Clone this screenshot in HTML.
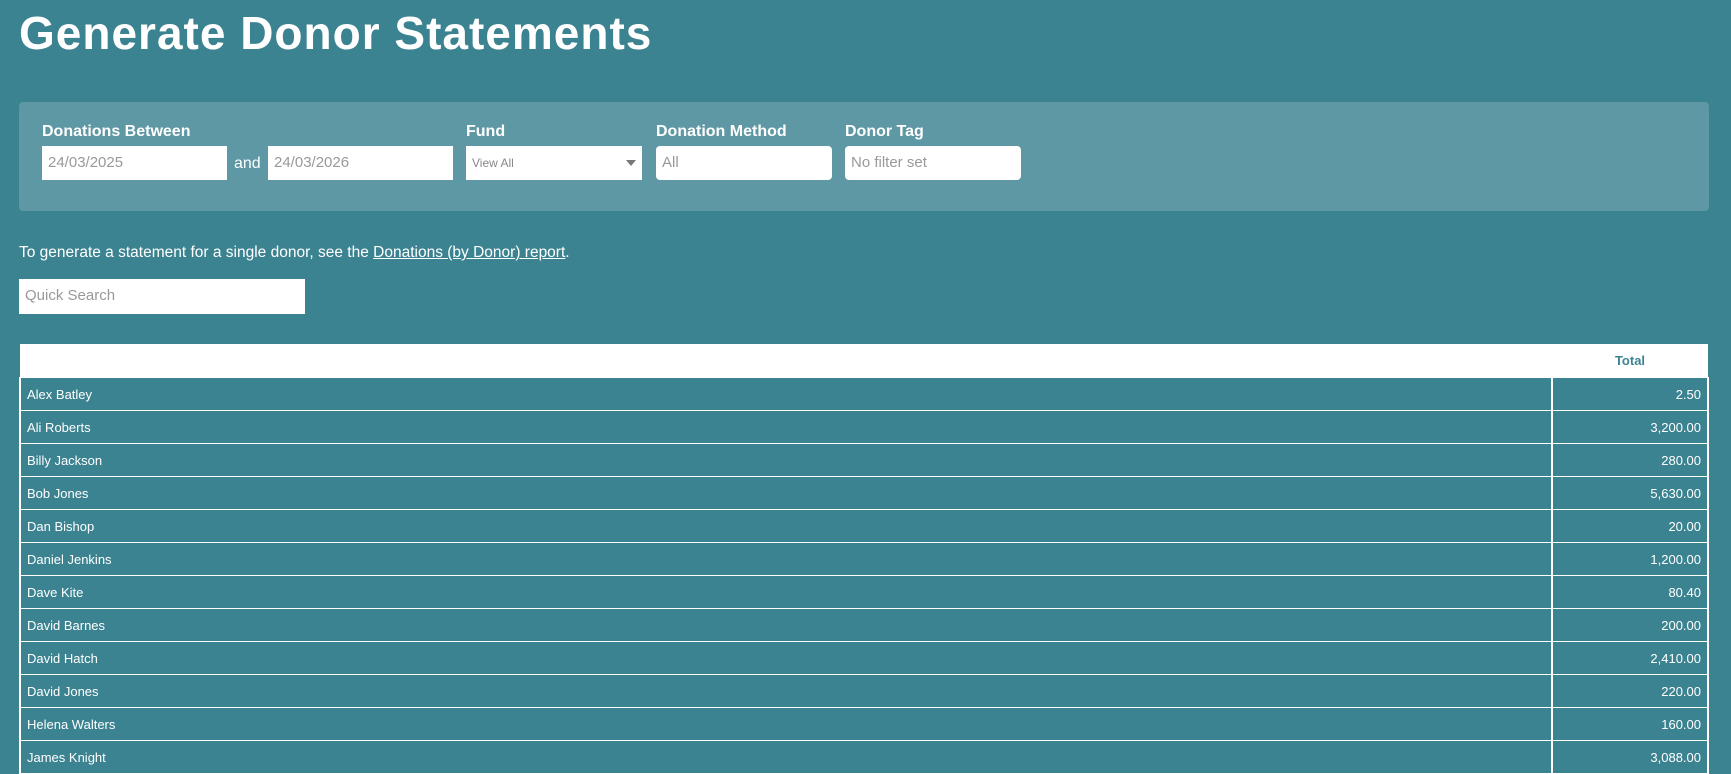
<!DOCTYPE html>
<html><head><style>
body{margin:0;width:1731px;height:773px;overflow:hidden;background:#3c8391;font-family:"Liberation Sans",sans-serif;color:#fff;position:relative}
.a{position:absolute}
h1{position:absolute;left:19px;top:6px;margin:0;font-size:46px;font-weight:bold;letter-spacing:1px}
.panel{left:19px;top:102px;width:1690px;height:109px;background:#5e98a4;border-radius:4px}
.lbl{font-weight:bold;font-size:16px;top:123px}
.inp{top:146px;height:34px;background:#fff;color:#999;font-size:15px;line-height:34px;padding-left:6px;box-sizing:border-box}
.txt{left:19px;top:244px;font-size:15.5px}
table{position:absolute;left:19px;top:344px;width:1690px;border-collapse:collapse;font-size:13px}
td{height:33px;padding:0 6px;border:1px solid #fff;border-width:1px 2px;box-sizing:border-box}
th{height:31px;background:#fff;color:#3c8391;font-size:13px;text-align:center}
td.r{text-align:right;width:156px}
</style></head><body>
<h1>Generate Donor Statements</h1>
<div class="a panel"></div>
<div class="a lbl" style="left:42px">Donations Between</div>
<div class="a lbl" style="left:466px">Fund</div>
<div class="a lbl" style="left:656px">Donation Method</div>
<div class="a lbl" style="left:845px">Donor Tag</div>
<div class="a inp" style="left:42px;width:185px">24/03/2025</div>
<div class="a" style="left:234px;top:155px;font-size:16px">and</div>
<div class="a inp" style="left:268px;width:185px">24/03/2026</div>
<div class="a inp" style="left:466px;width:176px;font-size:12px;color:#888">View All<span style="position:absolute;right:6px;top:14px;border:5px solid transparent;border-top:6px solid #777;border-bottom:0"></span></div>
<div class="a inp" style="left:656px;width:176px;border-radius:4px">All</div>
<div class="a inp" style="left:845px;width:176px;border-radius:4px">No filter set</div>
<div class="a txt">To generate a statement for a single donor, see the <u>Donations (by Donor) report</u>.</div>
<div class="a inp" style="left:19px;top:279px;width:286px;height:35px;font-size:15px">Quick Search</div>
<table>
<tr><th></th><th>Total</th></tr>
<tr><td>Alex Batley</td><td class="r">2.50</td></tr>
<tr><td>Ali Roberts</td><td class="r">3,200.00</td></tr>
<tr><td>Billy Jackson</td><td class="r">280.00</td></tr>
<tr><td>Bob Jones</td><td class="r">5,630.00</td></tr>
<tr><td>Dan Bishop</td><td class="r">20.00</td></tr>
<tr><td>Daniel Jenkins</td><td class="r">1,200.00</td></tr>
<tr><td>Dave Kite</td><td class="r">80.40</td></tr>
<tr><td>David Barnes</td><td class="r">200.00</td></tr>
<tr><td>David Hatch</td><td class="r">2,410.00</td></tr>
<tr><td>David Jones</td><td class="r">220.00</td></tr>
<tr><td>Helena Walters</td><td class="r">160.00</td></tr>
<tr><td>James Knight</td><td class="r">3,088.00</td></tr>
</table>
</body></html>
